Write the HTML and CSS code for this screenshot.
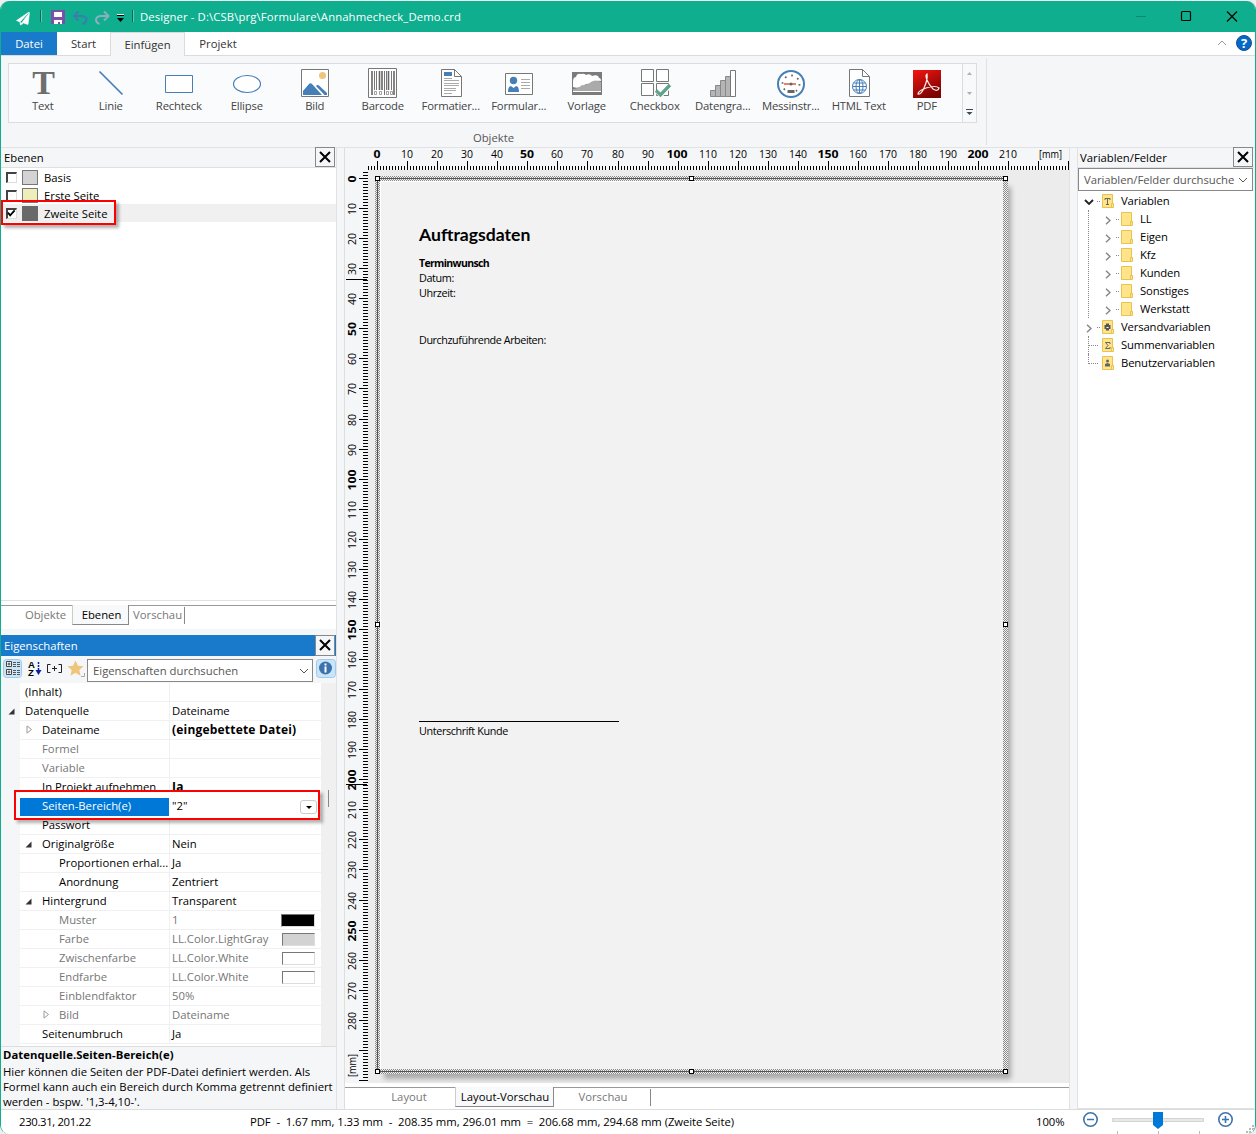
FILE: index.html
```html
<!DOCTYPE html>
<html lang="de">
<head>
<meta charset="utf-8">
<title>Designer</title>
<link rel="stylesheet" href="styles.css">
</head>
<body>
<svg width="0" height="0" class="defs">
  <defs>
    <linearGradient id="pdfred" x1="0" y1="0" x2="0.5" y2="1"><stop offset="0" stop-color="#f51410"/><stop offset="1" stop-color="#7c0503"/></linearGradient>
    <symbol id="close" viewBox="0 0 12 12"><path d="M1 1l10 10M11 1L1 11" stroke="#000" stroke-width="2" fill="none"/></symbol>
    <symbol id="chev-down" viewBox="0 0 10 6"><path d="M1 1l4 4 4-4" stroke="#555" fill="none"/></symbol>
    <symbol id="chev-right" viewBox="0 0 6 9"><path d="M1 .7l4 3.8-4 3.8" stroke="#888" stroke-width="1.5" fill="none"/></symbol>
    <symbol id="folder" viewBox="0 0 12 14"><path d="M.5.5h10v9h1v4H.5z" fill="#ffe48a" stroke="#e9c254"/><path d="M9.5 13V9.500h2" fill="none" stroke="#e9c254"/></symbol>
    <symbol id="open" viewBox="0 0 7 7"><path d="M6.500 .5v6H.5z" fill="#333"/></symbol>
    <symbol id="shut" viewBox="0 0 7 9"><path d="M1 .9v7.200L5.500 4.500z" fill="#fff" stroke="#999"/></symbol>
  </defs>
</svg>
<div class="window">
  <header class="titlebar">
    <svg class="quick" width="136" height="31" viewBox="0 0 136 31">
      <path d="M29 11L16.500 19.500l3.500 1.500zM29.500 11.500l-1.500 12-6-2zM20 21.500l3 1-2.500 1.500z" fill="#fff" stroke="#fff" stroke-width=".6"/>
      <path d="M40.500 9v12M132.500 9v12" stroke="#0a6b58" />
      <path d="M41.500 9v12M133.500 9v12" stroke="#5cc9b4"/>
      <path d="M51 9h14v14H51z" fill="#7e4fa8"/><path d="M54 11h8v5h-8z" fill="#fff"/><path d="M54 19h8v4h-2v-2h-2v2h-4z" fill="#fff"/>
      <path d="M78.500 10.500L74 15l4.500 4.500M74.500 15H82q5 1 4.500 4-.5 3-4.500 4" fill="none" stroke="#3f7cae" stroke-width="2"/>
      <path d="M104 10.500l4.500 4.500-4.500 4.500M108 15h-8q-4 1-4 4 .5 3 3.500 4" fill="none" stroke="#8aaebb" stroke-width="2"/>
      <path d="M117 14.500h7" stroke="#000"/><path d="M117 13.500h7" stroke="#d8f3ee"/><path d="M117 17h7l-3.500 4z" fill="#000"/>
    </svg>
    <span class="title">Designer - D:\CSB\prg\Formulare\Annahmecheck_Demo.crd</span>
    <svg class="winbtns" width="120" height="31" viewBox="0 0 120 31">
      <path d="M0 15.500h10" stroke="#0b8a72"/>
      <rect x="45.500" y="10.500" width="9" height="9" rx="1" fill="none" stroke="#000" stroke-width="1.200"/>
      <path d="M91 10.500l10 10M101 10.500l-10 10" stroke="#000" stroke-width="1.200"/>
    </svg>
  </header>
  <nav class="tabs">
    <span class="tab file">Datei</span><span class="tab start">Start</span><span class="tab current">Einfügen</span><span class="tab project">Projekt</span>
    <svg class="help" width="40" height="23" viewBox="0 0 40 23">
      <path d="M3 13l4-4 4 4" fill="none" stroke="#999"/>
      <circle cx="29" cy="11" r="7.500" fill="#0568c8" stroke="#14508f"/><text x="29" y="15.500" text-anchor="middle" class="qmark">?</text>
    </svg>
  </nav>
  <section class="ribbon">
    <div class="group">
      <div class="gallery">
        <div class="tool"><svg viewBox="0 0 32 32"><text x="17.500" y="26" text-anchor="middle" class="bigt">T</text></svg><span>Text</span></div>
        <div class="tool"><svg viewBox="0 0 32 32"><path d="M5.500 3.500l23 23" stroke="#467fb8" stroke-width="1.700"/></svg><span>Linie</span></div>
        <div class="tool"><svg viewBox="0 0 32 32"><path d="M3.500 7.500h27v17h-27z" fill="#fff" stroke="#467fb8"/></svg><span>Rechteck</span></div>
        <div class="tool"><svg viewBox="0 0 32 32"><ellipse cx="17" cy="16" rx="13.500" ry="8.500" fill="#fff" stroke="#467fb8" stroke-width="1.200"/></svg><span>Ellipse</span></div>
        <div class="tool"><svg viewBox="0 0 32 32"><path d="M3.500 1.500h27v27h-27z" fill="#fff" stroke="#777"/><circle cx="24.500" cy="7.500" r="3.500" fill="#f0c47a"/><path d="M5 27v-4l6-7q1.500-1.500 3 0l10 11zM18 18q1.500-2 3.500 0l7.500 7v2h-2.500z" fill="#467fb8"/></svg><span>Bild</span></div>
        <div class="tool"><svg viewBox="0 0 32 32"><path d="M2.500.5h28v29h-28z" fill="#fff" stroke="#777"/><path d="M6 3v24M13.500 3v19M16 3v19M22.500 3v19M28 3v24" stroke="#666" stroke-width="1.600"/><path d="M8.500 3v19M10.500 3v19M18.500 3v24M20.500 3v19M25.500 3v19" stroke="#777"/><path d="M8.500 23.500h2v3h-2zM13.500 23.500h2v3h-2zM20.500 23.500h2v3h-2zM24.500 23.500h2v3h-2z" fill="none" stroke="#888" stroke-width=".8"/></svg><span>Barcode</span></div>
        <div class="tool"><svg viewBox="0 0 32 32"><path d="M7.500 1.500h13l7 7v20h-20z" fill="#fff" stroke="#777"/><path d="M20.500 1.500v7h7" fill="none" stroke="#777"/><path d="M10 4h8v4h-8z" fill="#467fb8"/><path d="M10 10.500h8M10 12.500h15M10 15.500h15M10 17.500h15M10 20.500h12M10 22.500h12M10 25.500h8" stroke="#aaa"/></svg><span>Formatier...</span></div>
        <div class="tool"><svg viewBox="0 0 32 32"><path d="M3.500 5.500h27v21h-27z" fill="#fff" stroke="#777"/><circle cx="11.500" cy="12.500" r="3.700" fill="#467fb8"/><path d="M6 24q0-6 3-6l2.500 2 2.500-2q3 0 3 6z" fill="#467fb8"/><path d="M19 11.500h9M19 14.500h9M19 17.500h9M19 20.500h9" stroke="#aaa"/></svg><span>Formular...</span></div>
        <div class="tool"><svg viewBox="0 0 32 32"><path d="M2 4h30v23H2z" fill="#7b7b7b"/><path d="M3 14q0-5 3-5 1-4 5-3 3-1 5 1 4-2 6 1 6-2 7 2 2 0 2 3-6-1-10 3-5-1-8 2-5 3-10 1z" fill="#fff"/><path d="M3 21q5 0 9-4 5 1 9-3 4-3 10 0v9H3z" fill="#aaa"/><path d="M3 23.500h28" stroke="#fff"/></svg><span>Vorlage</span></div>
        <div class="tool"><svg viewBox="0 0 34 32" class="wide"><path d="M3.500 1.500h12v12h-12zM18.500 1.500h12v12h-12zM3.500 15.500h12v12h-12zM18.500 15.500h12v12h-12z" fill="#fff" stroke="#777"/><path d="M18.500 23.500l4.500 4L32 18" fill="none" stroke="#fff" stroke-width="4"/><path d="M18 22.500l4.500 4.500L32 17" fill="none" stroke="#5fa38c" stroke-width="3.300"/></svg><span>Checkbox</span></div>
        <div class="tool"><svg viewBox="0 0 32 32"><path d="M4.500 22.500h5v6h-5zM9.500 17.500h5v11h-5zM14.500 12.500h5v16h-5zM19.500 8.500h5v20h-5z" fill="#b5b5b5" stroke="#888"/><path d="M24.500 2.500h5v26h-5z" fill="#fff" stroke="#777"/></svg><span>Datengra...</span></div>
        <div class="tool"><svg viewBox="0 0 32 32"><circle cx="17" cy="16" r="13" fill="#fff" stroke="#467fb8" stroke-width="2"/><circle cx="17" cy="16" r="8.500" fill="none" stroke="#666" stroke-width="1.800" stroke-dasharray="1.700 4.970"/><path d="M10 16h12" stroke="#e05a3a" stroke-width="1.600"/><circle cx="17" cy="16" r="1.500" fill="#666"/><path d="M13 21.500h8v4h-8z" fill="#666" stroke="#fff"/></svg><span>Messinstr...</span></div>
        <div class="tool"><svg viewBox="0 0 32 32"><path d="M7.500 1.500h13l7 7v20h-20z" fill="#fff" stroke="#777"/><path d="M20.500 1.500v7h7" fill="none" stroke="#777"/><g fill="none" stroke="#467fb8"><circle cx="17.500" cy="18.500" r="7"/><ellipse cx="17.500" cy="18.500" rx="3.500" ry="7"/><path d="M17.500 11.500v14M10.500 18.500h14M11.500 15h12M11.500 22h12"/></g></svg><span>HTML Text</span></div>
        <div class="tool"><svg viewBox="0 0 32 32"><path d="M3 2h28v28H3z" fill="url(#pdfred)"/><path d="M17 6q-2 1 0 6 2 5 6 9 5 3 6-1-3-3-13 0-8 3-8 6 3 1 6-6 4-9 3-14z" fill="none" stroke="#fbeaea" stroke-width="1.200"/></svg><span>PDF</span></div>
        <svg class="scrollers" width="14" height="58" viewBox="0 0 14 58"><path d="M.5 0v58" stroke="#dadcdf"/><path d="M5 11l2.500-3L10 11z" fill="#aab2bb"/><path d="M5 28l2.500 3L10 28z" fill="#aab2bb"/><path d="M4 45.500h7" stroke="#3b4a5a"/><path d="M4.500 48h6l-3 3z" fill="#3b4a5a"/></svg>
      </div>
      <div class="grouplabel">Objekte</div>
    </div>
  </section>
  <main class="main">
    <aside class="left">
      <div class="panelhead"><span>Ebenen</span><span class="xbtn"><svg><use href="#close"/></svg></span></div>
      <div class="layers">
        <div class="layer"><i class="check"></i><i class="swatch light"></i>Basis</div>
        <div class="layer"><i class="check"></i><i class="swatch yellow"></i>Erste Seite</div>
        <div class="layer chosen"><i class="check"><svg viewBox="0 0 10 10"><path d="M1 4l2.500 3L8.500 1.500" fill="none" stroke="#000" stroke-width="2"/></svg></i><i class="swatch dark"></i>Zweite Seite<b class="mark"></b></div>
      </div>
      <div class="strip">
        <span class="st o">Objekte</span><span class="st e active">Ebenen</span><span class="st v"><em>Vorschau</em></span>
      </div>
      <div class="panelhead blue"><span>Eigenschaften</span><span class="xbtn"><svg><use href="#close"/></svg></span></div>
      <div class="ptools">
        <svg width="86" height="26" viewBox="0 0 86 26">
          <rect x="2.500" y="2.500" width="18" height="18" rx="3" fill="#cce4f7" stroke="#9ccbf0"/>
          <g fill="#fff" stroke="#333" stroke-width=".9"><path d="M5.500 4.500h5v5h-5zM5.500 12.500h5v5h-5z"/><path d="M6.500 7h3M8 5.500v3M6.500 15h3M8 13.500v3"/></g>
          <path d="M12 5.500h3M16 5.500h3M12 7.500h3M16 7.500h3M12 9.500h3M16 9.500h3M12 13.500h3M16 13.500h3M12 15.500h3M16 15.500h3M12 17.500h3M16 17.500h3" stroke="#555"/>
          <g class="az"><text x="27" y="11">A</text><text x="27" y="19">Z</text></g>
          <path d="M37.500 5v9" stroke="#0a1fa0" stroke-width="1.500" stroke-dasharray="2 1"/><path d="M34.500 13h6l-3 5z" fill="#0a1fa0"/>
          <path d="M49.500 7.500h-3v8h3M57.500 7.500h3v8h-3M53.500 9v5M51 11.500h5" fill="none" stroke="#222"/>
          <path d="M74.500 3.500l2.400 5.300 5.600.5-4.200 3.800 1.300 5.700-5.100-3-5.100 3 1.300-5.700L66.500 9.300l5.600-.5z" fill="#efc47b"/><path d="M83.500 16v3.500H80" fill="none" stroke="#aaa"/>
        </svg>
        <span class="combo">Eigenschaften durchsuchen<svg><use href="#chev-down"/></svg></span>
        <svg width="20" height="20" viewBox="0 0 20 20" class="info"><rect x=".5" y=".5" width="19" height="18" rx="3" fill="#cce4f7" stroke="#9ccbf0"/><circle cx="9.500" cy="9" r="6.500" fill="#3c73ad"/><path d="M9.500 4.500v2M9.500 7.500v6" stroke="#fff" stroke-width="2"/></svg>
      </div>
      <div class="props">
        <div class="grid">
          <div class="row"><span class="k">(Inhalt)</span><span class="v"></span></div>
          <div class="row"><svg class="tri t0"><use href="#open"/></svg><span class="k">Datenquelle</span><span class="v">Dateiname</span></div>
          <div class="row"><svg class="tri c1"><use href="#shut"/></svg><span class="k l1">Dateiname</span><span class="v bold">(eingebettete Datei)</span></div>
          <div class="row dim"><span class="k l1">Formel</span><span class="v"></span></div>
          <div class="row dim"><span class="k l1">Variable</span><span class="v"></span></div>
          <div class="row"><span class="k l1">In Projekt aufnehmen</span><span class="v bold">Ja</span></div>
          <div class="row picked"><b class="mark"></b><span class="k l1">Seiten-Bereich(e)</span><span class="v">"2"<i class="drop"></i></span></div>
          <div class="row"><span class="k l1">Passwort</span><span class="v"></span></div>
          <div class="row"><svg class="tri t1"><use href="#open"/></svg><span class="k l1">Originalgröße</span><span class="v">Nein</span></div>
          <div class="row"><span class="k l2">Proportionen erhal...</span><span class="v">Ja</span></div>
          <div class="row"><span class="k l2">Anordnung</span><span class="v">Zentriert</span></div>
          <div class="row"><svg class="tri t1"><use href="#open"/></svg><span class="k l1">Hintergrund</span><span class="v">Transparent</span></div>
          <div class="row dim"><span class="k l2">Muster</span><span class="v">1<i class="chip black"></i></span></div>
          <div class="row dim"><span class="k l2">Farbe</span><span class="v">LL.Color.LightGray<i class="chip gray"></i></span></div>
          <div class="row dim"><span class="k l2">Zwischenfarbe</span><span class="v">LL.Color.White<i class="chip"></i></span></div>
          <div class="row dim"><span class="k l2">Endfarbe</span><span class="v">LL.Color.White<i class="chip"></i></span></div>
          <div class="row dim"><span class="k l2">Einblendfaktor</span><span class="v">50%</span></div>
          <div class="row dim"><svg class="tri c2"><use href="#shut"/></svg><span class="k l2">Bild</span><span class="v">Dateiname</span></div>
          <div class="row"><span class="k l1">Seitenumbruch</span><span class="v">Ja</span></div>
        </div>
        <div class="scroll"><i></i></div>
      </div>
      <div class="desc"><strong>Datenquelle.Seiten-Bereich(e)</strong><p>Hier können die Seiten der PDF-Datei definiert werden. Als<br>Formel kann auch ein Bereich durch Komma getrennt definiert<br>werden - bspw. '1,3-4,10-'.</p></div>
    </aside>

    <section class="center">
      <svg class="hruler" id="hruler" width="724" height="22" viewBox="345 148 724 22"></svg>
      <div class="work">
        <svg class="vruler" id="vruler" width="23" height="913" viewBox="345 170 23 913"></svg>
        <div class="canvas">
          <div class="page">
            <div class="sheet">
              <h1>Auftragsdaten</h1>
              <h2>Terminwunsch</h2>
              <p class="date">Datum:</p>
              <p class="time">Uhrzeit:</p>
              <p class="works">Durchzuführende Arbeiten:</p>
              <p class="sign">Unterschrift Kunde</p>
            </div>
            <i class="h" style="left:0;top:0"></i><i class="h" style="left:314px;top:0"></i><i class="h" style="left:628px;top:0"></i>
            <i class="h" style="left:0;top:446px"></i><i class="h" style="left:628px;top:446px"></i>
            <i class="h" style="left:0;top:893px"></i><i class="h" style="left:314px;top:893px"></i><i class="h" style="left:628px;top:893px"></i>
          </div>
        </div>
      </div>
      <div class="strip views"><span class="st lay">Layout</span><span class="st lv active">Layout-Vorschau</span><span class="st vs"><em>Vorschau</em></span></div>
    </section>

    <aside class="right">
      <div class="panelhead"><span>Variablen/Felder</span><span class="xbtn"><svg><use href="#close"/></svg></span></div>
      <div class="combo search">Variablen/Felder durchsuche<svg><use href="#chev-down"/></svg></div>
      <div class="tree">
        <div class="node top"><svg class="ar big" viewBox="0 0 10 6"><path d="M1 1l4 4 4-4" stroke="#222" stroke-width="1.800" fill="none"/></svg><i class="dots"></i><svg class="fo" viewBox="0 0 12 14"><use href="#folder"/><path d="M3 6V4.500h5V6M5.500 4.500V11M4 10.500h3" fill="none" stroke="#666"/></svg>Variablen</div>
        <div class="kids">
          <div class="node"><svg class="ar"><use href="#chev-right"/></svg><i class="dots"></i><svg class="fo"><use href="#folder"/></svg>LL</div>
          <div class="node"><svg class="ar"><use href="#chev-right"/></svg><i class="dots"></i><svg class="fo"><use href="#folder"/></svg>Eigen</div>
          <div class="node"><svg class="ar"><use href="#chev-right"/></svg><i class="dots"></i><svg class="fo"><use href="#folder"/></svg>Kfz</div>
          <div class="node"><svg class="ar"><use href="#chev-right"/></svg><i class="dots"></i><svg class="fo"><use href="#folder"/></svg>Kunden</div>
          <div class="node"><svg class="ar"><use href="#chev-right"/></svg><i class="dots"></i><svg class="fo"><use href="#folder"/></svg>Sonstiges</div>
          <div class="node"><svg class="ar"><use href="#chev-right"/></svg><i class="dots"></i><svg class="fo"><use href="#folder"/></svg>Werkstatt</div>
        </div>
        <div class="node top"><svg class="ar"><use href="#chev-right"/></svg><i class="dots"></i><svg class="fo" viewBox="0 0 12 14"><use href="#folder"/><path d="M2.500 5h6v4h-6zM4 3.500h3V5H4zM4 9h3v1.500H4z" fill="#555"/><path d="M4.500 7.500h2" stroke="#fff"/></svg>Versandvariablen</div>
        <div class="node top leaf"><i class="elbow"></i><svg class="fo" viewBox="0 0 12 14"><use href="#folder"/><path d="M8 6V4.500H3.500L6 7.500 3.500 10.500H8V9" fill="none" stroke="#666"/></svg>Summenvariablen</div>
        <div class="node top leaf last"><i class="elbow"></i><svg class="fo" viewBox="0 0 12 14"><use href="#folder"/><circle cx="5.500" cy="5" r="1.500" fill="#666"/><path d="M3 10.500V8l2.500-1L8 8v2.500z" fill="#666"/></svg>Benutzervariablen</div>
      </div>
    </aside>
  </main>
  <footer class="status">
    <span class="pos">230.31, 201.22</span>
    <span class="sel">PDF&nbsp; - &nbsp;1.67 mm, 1.33 mm&nbsp; - &nbsp;208.35 mm, 296.01 mm&nbsp; = &nbsp;206.68 mm, 294.68 mm (Zweite Seite)</span>
    <span class="pct">100%</span>
    <svg class="zoomer" width="175" height="25" viewBox="1080 1109 175 25">
      <g fill="#fff" stroke="#3d74ae" stroke-width="1.600"><circle cx="1090.500" cy="1119.500" r="6.700"/><circle cx="1225.500" cy="1119.500" r="6.700"/><path d="M1087 1119.500h7M1222 1119.500h7M1225.500 1116v7"/></g>
      <path d="M1112.500 1118.500h91v3h-91z" fill="#e7e9e9" stroke="#d4d4d4"/>
      <path d="M1153 1112h10v13l-5 4-5-4z" fill="#0078d7"/>
      <path d="M1117.500 1131v3M1158.500 1131v3M1199.500 1131v3" stroke="#bbb"/>
      <path d="M1252 1125h2v2h-2zM1249 1128h2v2h-2zM1252 1128h2v2h-2zM1246 1131h2v2h-2zM1249 1131h2v2h-2z" fill="#b8b8b8"/>
    </svg>
  </footer>
</div>
<script src="rulers.js"></script>
</body>
</html>
```
FILE: styles.css
```css
* { box-sizing: border-box; }
body { margin: 0; background: #eef0f0; font: 11.3px/18px "Open Sans", "Noto Sans", sans-serif; color: #000; overflow: hidden; }
.defs { position: absolute; }
i, em { font-style: normal; }
svg { display: block; flex: none; }
.window { width: 1256px; height: 1133px; margin-top: 1px; border: 1px solid #0fae8f; border-bottom: 0; border-top: 0; border-radius: 9px; overflow: hidden; background: #f5f6f8; display: flex; flex-direction: column; }

.titlebar { height: 31px; flex: none; background: #0fae8f; display: flex; align-items: center; margin: 0 -1px; padding-left: 1px; color: #fff; }
.quick { margin-left: -1px; }
.title { margin-left: 4px; padding-top: 1px; letter-spacing: .12px; }
.winbtns { margin-left: auto; }
.tabs { height: 24px; flex: none; display: flex; background: #fff; border-bottom: 1px solid #dadbdc; color: #333; }
.tab { height: 23px; line-height: 24px; text-align: center; }
.file { width: 56px; background: #1979ca; color: #fff; }
.start { width: 53px; }
.current { width: 75px; height: 24px; background: #f5f6f8; border: 1px solid #dadbdc; border-bottom: 0; line-height: 23px; }
.project { width: 66px; }
.help { margin-left: auto; overflow: visible; }
.qmark { font: bold 13px "Open Sans", sans-serif; fill: #fff; }
.ribbon { height: 91px; flex: none; padding: 2px 0 0 7px; }
.group { width: 979px; height: 87px; border-right: 1px solid #dfe1e4; padding-top: 5px; }
.gallery { width: 969px; height: 60px; display: flex; border: 1px solid #dadcdf; background: #fafbfd; }
.tool { width: 68px; flex: none; display: flex; flex-direction: column; align-items: center; padding-top: 4px; color: #444; line-height: 14px; white-space: nowrap; letter-spacing: -.2px; position: relative; left: -1px; }
.tool span { padding-left: 1.500px; }
.tool svg { width: 32px; height: 32px; margin-bottom: -1px; overflow: visible; }
.tool svg.wide { width: 34px; margin-right: -2px; }
.bigt { font: bold 34px "Liberation Serif", serif; fill: #6e6e6e; }
.az { font: bold 9.500px "Liberation Sans", sans-serif; }
.scrollers { margin-left: auto; background: #f8f9fb; }
.grouplabel { text-align: center; width: 971px; color: #555; line-height: 16px; padding-top: 7px; }

.main { flex: 1; display: flex; min-height: 0; border-top: 1px solid #e0e2e4; }
.left { width: 336px; display: flex; flex-direction: column; border-right: 1px solid #e2e2e4; }
.panelhead { height: 20px; flex: none; display: flex; justify-content: space-between; padding: 0 1px 0 3px; line-height: 20px; border-bottom: 1px solid #e0e0e2; }
.xbtn { width: 20px; height: 20px; margin-top: -1px; border: 1px solid #888; background: #f5f6f8; padding: 3px 3px; }
.xbtn svg { width: 12px; height: 12px; }
.layers { height: 433px; flex: none; background: #fff; border-bottom: 1px solid #e0e0e2; }
.layer { height: 18px; display: flex; align-items: center; position: relative; line-height: 20px; }
.layer { padding-top: 1px; }
.layer.chosen { background: #f0f0f0; }
.check { width: 11px; height: 11px; background: #fff; border: 1px solid #ddd; border-top: 2px solid #444; border-left: 2px solid #444; margin: -1px 5px 0 5px; }
.check svg { width: 9px; height: 9px; margin: -1px 0 0 -1px; }
.swatch { width: 16px; height: 15px; border: 1px solid #777; margin-right: 6px; }
.light { background: #d3d3d3; } .yellow { background: #eeeebb; } .dark { background: #696969; border-color: #696969; }
.mark { position: absolute; border: 2px solid #fe0000; box-shadow: 3px 3px 3px rgba(0,0,0,.3); }
.layer .mark { left: 0; top: -4px; width: 115px; height: 25px; }

.strip { height: 28px; flex: none; background: linear-gradient(#fff 0 4px, #999 4px 5px, #fff 5px); display: flex; padding-top: 4px; color: #777; line-height: 20px; }
.st { height: 20px; text-align: center; }
.st.active { background: #f8f9fa; border: 1px solid #888; border-top: 0; border-left-color: #ccc; color: #000; }
.o { width: 71px; padding-left: 18px; } .e { width: 57px; padding-left: 2px; }
.v em { border-right: 1px solid #888; padding: 0 2px 0 4px; display: block; margin-top: 2px; height: 17px; line-height: 16px; }
.blue { height: 21px; margin-top: 6px; background: #1979ca; color: #fff; line-height: 22px; border: 0; }
.blue .xbtn { margin-top: 0; height: 21px; }
.ptools { height: 27px; flex: none; display: flex; padding-top: 1px; }
.combo { border: 1px solid #888; background: #fff; color: #555; display: flex; align-items: center; justify-content: space-between; padding: 0 4px 0 5px; }
.combo svg { width: 10px; height: 6px; }
.ptools .combo { width: 226px; height: 23px; margin-top: 2px; padding-right: 3px; line-height: 20px; }
.info { margin: 2px 0 0 3px; }
.props { height: 363px; flex: none; display: flex; }
.grid { width: 320px; padding-left: 19px; background: linear-gradient(90deg, #f5f6f8 19px, #fff 19px); }
.row { height: 19px; display: flex; border-bottom: 1px solid #f0f0f2; position: relative; line-height: 18px; white-space: nowrap; }
.row .k { width: 150px; flex: none; padding-left: 5px; border-right: 1px solid #f0f0f2; z-index: 2; }
.row .k.l1 { padding-left: 22px; } .row .k.l2 { padding-left: 39px; }
.row .v { flex: 1; padding-left: 2px; display: flex; justify-content: space-between; align-items: center; z-index: 2; }
.dim { color: #767676; }
.row .bold { font-weight: 700; font-size: 12px; letter-spacing: .2px; }
.tri { position: absolute; width: 7px; height: 7px; top: 6px; overflow: visible; z-index: 2; }
.t0 { left: -12px; } .t1 { left: 5px; } .c1 { left: 6px; height: 9px; top: 4px; } .c2 { left: 23px; height: 9px; top: 4px; }
.picked { z-index: 3; }
.picked .k { background: #0078d7; color: #fff; border: 0; height: 18px; margin-top: 1px; line-height: 16px; width: 149px; margin-right: 1px; }
.picked .mark { left: -6px; top: -7px; width: 306px; height: 30px; background: linear-gradient(90deg, #f5f6f8 4px, #fff 4px); }
.drop { width: 17px; height: 14px; border: 1px solid #ccc; border-radius: 3px; margin: 2px 4px 0 0; padding: 5px 0 0 5px; }
.drop::before { content: ""; display: block; width: 0; border: 3px solid transparent; border-top-color: #000; border-bottom: 0; }
.chip { width: 33px; height: 13px; border: 1px solid #ddd; border-top-color: #777; border-left-color: #777; margin-right: 6px; }
.chip.gray { background: #d3d3d3; } .chip.black { background: #000; width: 34px; }
.scroll { width: 15px; background: #f0f0f0; padding: 107px 0 0 7px; }
.scroll i { display: block; width: 1px; height: 17px; background: #888; }
.desc { flex: 1; border-top: 1px solid #ddd; padding-left: 2px; line-height: 15px; white-space: nowrap; }
.desc strong { display: block; line-height: 16px; letter-spacing: .08px; }
.desc p { margin: 1px 0 0; }

.center { width: 726px; margin-left: 7px; border-left: 1px solid #dcdfe1; display: flex; flex-direction: column; border-right: 1px solid #e2e2e4; }
.hruler, .vruler { overflow: visible; }
.work { display: flex; height: 913px; flex: none; }
.canvas { width: 701px; background: #ececec; padding: 6px 0 0 7px; }
.page { position: relative; width: 633px; height: 898px; padding: 5px; background: repeating-conic-gradient(#8a8a8a 0 25%, #f2f2f2 0 50%) 0 0/2px 2px; box-shadow: 6px 8px 5px -3px rgba(0,0,0,.28); }
.page::before { content: ""; position: absolute; left: 2px; top: 2px; right: 2px; bottom: 2px; border: 1px solid #555; border-right: 0; }
.sheet { position: relative; width: 623px; height: 888px; background: #f2f2f2; border-left: 1px solid #fff; border-top: 1px solid #fff; padding: 42px 0 0 38px; letter-spacing: -.38px; font-size: 10.8px; line-height: 15px; }
.sheet h1 { margin: 0 0 10px; font: bold 17.600px/22px "Lato", sans-serif; letter-spacing: 0; }
.sheet h2 { margin: 0; font-size: 10.500px; line-height: 15px; letter-spacing: -.65px; }
.sheet p { margin: 0; }
.sheet .date { margin-top: -1px; }
.sheet .works { margin-top: 32px; letter-spacing: -.44px; }
.sheet .sign { margin-top: 374px; width: 200px; border-top: 1px solid #000; padding-top: 1px; }
.h { position: absolute; width: 5px; height: 5px; border: 1px solid #000; background: #fff; }
.views { height: 26px; }
.lay { width: 110px; padding-left: 18px; } .lv { width: 99px; padding-left: 1px; }
.vs em { display: block; width: 97px; padding-left: 2px; border-right: 1px solid #888; margin-top: 2px; height: 17px; line-height: 16px; }
.ruler-num { font-size: 11px; }
.ruler-num.fifty { font-weight: 700; }

.right { width: 177px; margin-left: 7px; border-left: 1px solid #e2e2e4; display: flex; flex-direction: column; }
.right .panelhead { padding-left: 2px; }
.search { height: 23px; flex: none; width: 175px; letter-spacing: -.05px; }
.tree { flex: 1; background: #fff; padding-top: 1px; border-bottom: 1px solid #e0e0e2; letter-spacing: -.15px; }
.node { height: 18px; display: flex; align-items: center; padding-left: 7px; line-height: 18px; }
.kids { margin-left: 10px; border-left: 1px dotted #888; }
.kids .node { padding-left: 15px; }
.ar { width: 6px; height: 9px; margin: 3px 2px 0 1px; }
.ar.big { width: 10px; height: 6px; margin: 2px 0 0 -1px; }
.dots { width: 3px; border-top: 1px dotted #888; margin: 1px 2px 0 3px; }
.fo { width: 12px; height: 14px; margin: 0 7px 0 0; }
.elbow { width: 11px; height: 18px; margin: 0 0 0 3px; border-left: 1px dotted #888; background: repeating-linear-gradient(90deg, #888 0 1px, transparent 1px 2px) 0 9px/12px 1px no-repeat; margin-right: 3px; }
.last .elbow { height: 10px; margin-bottom: 8px; }

.status { height: 25px; flex: none; background: #fff; border-top: 1px solid #dcdcdc; display: flex; align-items: center; line-height: 24px; white-space: pre; letter-spacing: -.06px; }
.pos { width: 231px; padding-left: 18px; margin-right: 18px; letter-spacing: -.33px; }
.sel { width: 786px; }
.pct { width: 44px; }
.zoomer { margin-top: -1px; }
```
FILE: rulers.js
```js
(function () {
  var NS = 'http://www.w3.org/2000/svg';
  var STEP = 3.0065; // pixels per millimetre

  function add(svg, name, attrs, text) {
    var el = document.createElementNS(NS, name);
    for (var key in attrs) el.setAttribute(key, attrs[key]);
    if (text !== undefined) el.textContent = text;
    svg.appendChild(el);
  }

  function label(svg, n, x, y, rotate) {
    var bold = n % 50 === 0;
    var width = String(n).length * (bold ? 7 : 6);
    var attrs = {
      x: x - width / 2, y: y, textLength: width, lengthAdjust: 'spacingAndGlyphs',
      class: 'ruler-num' + (bold ? ' fifty' : '')
    };
    if (rotate) attrs.transform = 'rotate(-90 ' + x + ' ' + y + ')';
    add(svg, 'text', attrs, n);
  }

  var h = document.getElementById('hruler');
  var v = document.getElementById('vruler');
  var mm, p;
  for (mm = -3; mm <= 230; mm++) {
    p = Math.round(377 + mm * STEP);
    add(h, 'rect', mm % 10 ? { x: p, y: 166, width: 1, height: 4 } : { x: p, y: 161, width: 1, height: 9 });
    if (mm >= 0 && mm <= 210 && mm % 10 === 0) label(h, mm, mm === 100 ? p - 1 : p, 158);
  }
  add(h, 'text', { x: 1039, y: 158, class: 'ruler-num', textLength: 23, lengthAdjust: 'spacingAndGlyphs' }, '[mm]');
  for (mm = -2; mm <= 300; mm++) {
    p = Math.round(178 + mm * STEP);
    add(v, 'rect', mm % 10 ? { x: 363, y: p, width: 5, height: 1 } : { x: 359, y: p, width: 9, height: 1 });
    if (mm >= 0 && mm <= 280 && mm % 10 === 0) label(v, mm, 356, p + 1, true);
  }
  add(v, 'text', { x: 356, y: 1077, class: 'ruler-num', textLength: 23, lengthAdjust: 'spacingAndGlyphs', transform: 'rotate(-90 356 1077)' }, '[mm]');
  add(v, 'rect', { x: 346, y: 279, width: 21, height: 1 });
  add(v, 'rect', { x: 346, y: 784, width: 21, height: 1 });
})();
```
